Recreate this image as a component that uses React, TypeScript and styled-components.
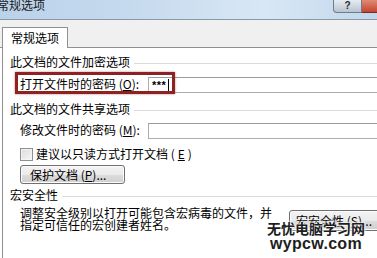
import React from "react";
import styled, { createGlobalStyle } from "styled-components";

const GlobalStyle = createGlobalStyle`
  html, body {
    margin: 0;
    padding: 0;
    background: #ffffff;
  }
  body {
    font-family: "Noto Sans CJK SC", "Noto Sans", sans-serif;
  }
`;

const Window = styled.div`
  position: relative;
  width: 377px;
  height: 258px;
  overflow: hidden;
  background: #ffffff;
  color: #000000;
  font-size: 12px;
  font-family: "Noto Sans CJK SC", "Noto Sans", sans-serif;
`;

const TitleBar = styled.div`
  display: flex;
  align-items: flex-start;
  height: 19px;
  border-bottom: 1px solid #8a98a8;
  background: linear-gradient(
    90deg,
    #bad2ea 0%,
    #c6daee 35%,
    #d8e7f5 70%,
    #c2d7ec 100%
  );
`;

const Title = styled.div`
  flex: 1;
  margin-left: -3px;
  margin-top: -2px;
  font-size: 12px;
  line-height: 14px;
  color: #1a1a1a;
`;

const HelpButton = styled.div`
  width: 27px;
  height: 12px;
  border: 1px solid #6f7c8c;
  border-top: none;
  border-radius: 0 0 0 4px;
  background: linear-gradient(#e6ebf1, #b9c3ce);
  color: #2a2a2a;
  font-family: "Liberation Sans", sans-serif;
  font-size: 10px;
  font-weight: bold;
  line-height: 11px;
  text-align: center;
`;

const CloseButton = styled.div`
  width: 15px;
  height: 12px;
  border-bottom: 1px solid #7a2a20;
  background: linear-gradient(#e08a74, #c4452f);
`;

const TabStrip = styled.div`
  display: flex;
  align-items: flex-end;
  height: 27px;
  padding-left: 2px;
  background: #f0f0f0;
  border-bottom: 1px solid #8e9092;
`;

const Tab = styled.div`
  position: relative;
  z-index: 1;
  width: 64px;
  height: 20px;
  margin-bottom: -1px;
  border: 1px solid #8e9092;
  border-bottom: none;
  background: #ffffff;
  line-height: 20px;
  text-align: center;
`;

const Panel = styled.div`
  margin-left: 2px;
  height: 220px;
  border-left: 1px solid #8e9092;
  padding-left: 7px;
  display: flex;
  flex-direction: column;
`;

const GroupHeader = styled.div<{ $top: number }>`
  display: flex;
  align-items: center;
  height: 14px;
  margin-top: ${({ $top }) => $top}px;
  line-height: 14px;
  white-space: nowrap;

  &::after {
    content: "";
    flex: 1;
    height: 1px;
    margin-left: 4px;
    margin-top: 3px;
    background: #d9dcdf;
  }
`;

const FieldRow = styled.div<{ $top: number; $height: number }>`
  position: relative;
  display: flex;
  align-items: center;
  height: ${({ $height }) => $height}px;
  margin-top: ${({ $top }) => $top}px;
  padding-left: 10px;
  white-space: nowrap;
`;

const FieldLabel = styled.div`
  width: 128px;
  flex-shrink: 0;
  line-height: 14px;
`;

const TextBox = styled.div`
  flex: 1;
  height: 14px;
  margin-top: 2px;
  border: 1px solid #abadb3;
  border-top-color: #9a9ca2;
  border-right: none;
  background: #ffffff;
  display: flex;
  align-items: center;
  padding-left: 3px;
  font-family: "Liberation Sans", sans-serif;
  font-size: 11px;
  font-weight: bold;
  letter-spacing: 0.5px;
`;

const Caret = styled.span`
  display: inline-block;
  width: 1px;
  height: 12px;
  margin-left: 2px;
  background: #000000;
`;

const Highlight = styled.div`
  position: absolute;
  left: 5px;
  top: -1px;
  width: 154px;
  height: 16px;
  border: 3px solid #8d2222;
  box-shadow: 0 0 2px rgba(150, 40, 40, 0.6);
  pointer-events: none;
`;

const Mnemonic = styled.span`
  text-decoration: underline;
`;

const CheckRow = styled.div`
  display: flex;
  align-items: center;
  gap: 3px;
  height: 14px;
  margin-top: 7px;
  padding-left: 10px;
  white-space: nowrap;
  line-height: 14px;
`;

const CheckBox = styled.div`
  width: 11px;
  height: 11px;
  border: 1px solid #8e8f8f;
  background: linear-gradient(135deg, #dcdcdc, #f6f6f6);
  box-shadow: inset 0 0 0 1px #f4f4f4;
`;

const PushButton = styled.div<{ $width: number; $top: number }>`
  box-sizing: border-box;
  width: ${({ $width }) => $width}px;
  height: 19px;
  margin-top: ${({ $top }) => $top}px;
  flex-shrink: 0;
  border: 1px solid #707070;
  border-radius: 3px;
  background: linear-gradient(#f3f3f3 0%, #ebebeb 50%, #dddddd 51%, #cfcfcf 100%);
  box-shadow: inset 0 0 0 1px #fbfbfb;
  padding-left: 9px;
  line-height: 17px;
  white-space: nowrap;
  overflow: hidden;
`;

const ButtonRow = styled.div`
  margin-top: 4px;
  padding-left: 10px;
`;

const SecurityRow = styled.div`
  display: flex;
  align-items: flex-start;
  margin-top: 5px;
  padding-left: 10px;
`;

const Description = styled.div`
  width: 252px;
  flex-shrink: 0;
  line-height: 12px;
  white-space: nowrap;
`;

const SecurityButton = styled(PushButton)`
  margin-left: 17px;
  height: 21px;
  padding-left: 6px;
  line-height: 19px;
`;

const Watermark = styled.div`
  position: absolute;
  left: 264px;
  top: 220px;
  width: 104px;
  text-align: center;
  color: #1e1e1e;
  font-weight: bold;
  text-shadow: 0 0 2px #ffffff, 0 0 2px #ffffff, 0 0 3px #ffffff;
`;

const WatermarkTitle = styled.div`
  font-family: "Noto Sans CJK SC", sans-serif;
  font-size: 14px;
  line-height: 17px;
`;

const WatermarkUrl = styled.div`
  font-family: "Liberation Sans", sans-serif;
  font-size: 16px;
  line-height: 14px;
  letter-spacing: 0.3px;
`;

export default function App() {
  return (
    <>
      <GlobalStyle />
      <Window>
        <TitleBar>
          <Title>常规选项</Title>
          <HelpButton>?</HelpButton>
          <CloseButton />
        </TitleBar>
        <TabStrip>
          <Tab>常规选项</Tab>
        </TabStrip>
        <Panel>
          <GroupHeader $top={7}>此文档的文件加密选项</GroupHeader>
          <FieldRow $top={4} $height={22}>
            <FieldLabel>
              打开文件时的密码 (<Mnemonic>O</Mnemonic>):
            </FieldLabel>
            <TextBox>
              ***
              <Caret />
            </TextBox>
            <Highlight />
          </FieldRow>
          <GroupHeader $top={7}>此文档的文件共享选项</GroupHeader>
          <FieldRow $top={4} $height={20}>
            <FieldLabel>
              修改文件时的密码 (<Mnemonic>M</Mnemonic>):
            </FieldLabel>
            <TextBox />
          </FieldRow>
          <CheckRow>
            <CheckBox />
            建议以只读方式打开文档 (<Mnemonic>E</Mnemonic>)
          </CheckRow>
          <ButtonRow>
            <PushButton $width={105} $top={0}>
              保护文档 (<Mnemonic>P</Mnemonic>)...
            </PushButton>
          </ButtonRow>
          <GroupHeader $top={4}>宏安全性</GroupHeader>
          <SecurityRow>
            <Description>
              调整安全级别以打开可能包含宏病毒的文件，并
              <br />
              指定可信任的宏创建者姓名。
            </Description>
            <SecurityButton $width={100} $top={3}>
              宏安全性 (<Mnemonic>S</Mnemonic>)...
            </SecurityButton>
          </SecurityRow>
        </Panel>
        <Watermark>
          <WatermarkTitle>无忧电脑学习网</WatermarkTitle>
          <WatermarkUrl>wypcw.com</WatermarkUrl>
        </Watermark>
      </Window>
    </>
  );
}
